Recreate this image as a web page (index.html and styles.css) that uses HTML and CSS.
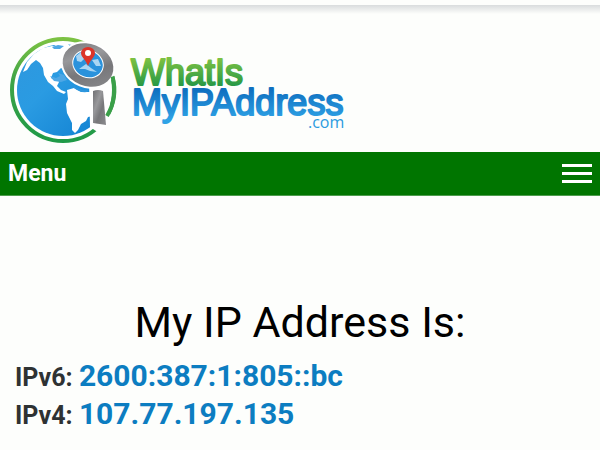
FILE: index.html
```html
<!DOCTYPE html>
<html lang="en">
<head>
    <meta charset="UTF-8">
    <meta name="viewport" content="width=device-width, initial-scale=1.0">
    <title>What Is My IP Address</title>
    <link rel="stylesheet" href="styles.css">
</head>
<body>
    <header>
        <a class="logo" href="#" aria-label="WhatIsMyIPAddress.com">
            <svg width="340" height="116" viewBox="8 32 340 116">
                <defs>
                    <linearGradient id="ring" x1="0" y1="0" x2="0" y2="1">
                        <stop offset="0" stop-color="#7cc243"/>
                        <stop offset="0.4" stop-color="#3fa447"/>
                        <stop offset="1" stop-color="#1f9a48"/>
                    </linearGradient>
                    <linearGradient id="sea" x1="0" y1="0" x2="1" y2="1">
                        <stop offset="0" stop-color="#2f97de"/>
                        <stop offset="0.4" stop-color="#2a9be2"/>
                        <stop offset="1" stop-color="#0f7fd0"/>
                    </linearGradient>
                    <linearGradient id="metal" x1="0" y1="0" x2="1" y2="1">
                        <stop offset="0" stop-color="#6f6f72"/>
                        <stop offset="0.35" stop-color="#98989b"/>
                        <stop offset="0.6" stop-color="#77777a"/>
                        <stop offset="1" stop-color="#8b8b8e"/>
                    </linearGradient>
                    <linearGradient id="green" gradientUnits="userSpaceOnUse" x1="0" y1="59" x2="0" y2="87">
                        <stop offset="0" stop-color="#7cc142"/>
                        <stop offset="1" stop-color="#239746"/>
                    </linearGradient>
                    <linearGradient id="blue" gradientUnits="userSpaceOnUse" x1="0" y1="90" x2="0" y2="120">
                        <stop offset="0" stop-color="#0f70c0"/>
                        <stop offset="1" stop-color="#2fa3e6"/>
                    </linearGradient>
                </defs>
                <!-- globe -->
                <circle cx="63" cy="90" r="51" fill="#fff" stroke="url(#ring)" stroke-width="4"/>
                <circle cx="63" cy="90" r="46" fill="url(#sea)"/>
                <!-- north america -->
                <path d="M23 72 L27 62 34 54 43 48 52 46 60 47 68 49 66 60 66 70 61 68 57 72 53 73 51 78 54 80 58 79 59 82 57 86 61 90 66 92 64 94 57 91 53 86 48 82 44 75 43 68 40 63 36 60 31 64 27 70Z" fill="#fff"/>
                <path d="M52 44 L60 42 68 44 73 49 66 54 64 49 58 47Z M60 57 L66 60 65 66 61 63Z" fill="#fff"/>
                <path d="M52 47 L58 45 64 46 60 49 54 49Z M50 76 L56 78 60 76 58 73 64 75 67 80 61 82 54 81Z" fill="#4ea7e5"/>
                <!-- south america -->
                <path d="M67 90 L74 88 81 92 92 92 93 116 88 117 86 121 81 124 78 130 75 133 72 130 72 123 67 113 66 104 68 99Z" fill="#fff"/>
                <!-- magnifier -->
                <ellipse cx="88" cy="65" rx="28" ry="23" fill="#fff" transform="rotate(22 88 65)"/>
                <path d="M89 80 H110 V124 L99 133 90 127Z" fill="#fff"/>
                <path d="M106 62 A51 51 0 0 1 107 116" fill="none" stroke="#3a9f48" stroke-width="4" stroke-dasharray="42 99" stroke-dashoffset="-16"/>
                <path d="M74 86 Q81 91 88 90 L87 92 Q80 93 74 88Z" fill="#2f97de"/>
                <ellipse cx="88" cy="65" rx="26" ry="21" fill="url(#metal)" transform="rotate(22 88 65)"/>
                <ellipse cx="88" cy="64" rx="16" ry="14" fill="#fff" transform="rotate(22 88 64)"/>
                <ellipse cx="88" cy="64" rx="15" ry="13" fill="#2a92dc" transform="rotate(22 88 64)"/>
                <path d="M76 56 L81 52 85 58 81 62 77 61Z M92 60 L98 59 101 66 96 66Z M79 69 L86 64 91 68 97 72 90 71 85 69Z" fill="#a9d5f3"/>
                <path d="M93 91 Q98 89 103 91 L106 125 93 123Z" fill="url(#metal)"/>
                <!-- pin -->
                <path d="M88 66 C86 60 81 57 81 53 A7 6 0 0 1 95 53 C95 57 90 60 88 66Z" fill="#dc3429"/>
                <circle cx="88" cy="53" r="3" fill="#fff"/>
                <!-- name -->
                <text class="name" x="131" y="85" fill="url(#green)" stroke="url(#green)">WhatIs</text>
                <text class="name" x="132" y="115" fill="url(#blue)" stroke="url(#blue)">MyIPAddress</text>
                <text class="domain" x="308" y="128" fill="#2b9bdf">.com</text>
            </svg>
        </a>
    </header>
    <nav>
        <span>Menu</span>
        <button class="toggle" aria-label="Open menu">
            <i></i><i></i><i></i>
        </button>
    </nav>
    <main>
        <h1>My IP Address Is:</h1>
        <p>IPv6: <a href="#">2600:387:1:805::bc</a></p>
        <p>IPv4: <a href="#">107.77.197.135</a></p>
    </main>
</body>
</html>
```
FILE: styles.css
```css
*{
    margin: 0px;
    padding: 0px;
    box-sizing: border-box;
}

body{
    background-color: #fdfefc;
    font-family: Roboto, Arial, sans-serif;
}
header{
    padding: 27px 8px 4px;
    border-top: 5px solid #fdfefc;
    background: linear-gradient(#d9dcdd, #fdfefc 9px);
    background-clip: padding-box;
}
.logo{
    display: block;
}
.logo svg{
    display: block;
    max-width: 100%;
}
.name{
    font-family: "Liberation Sans", Arial, sans-serif;
    font-size: 36px;
    stroke-width: 2px;
    stroke-linejoin: round;
}
.domain{
    font-family: "Open Sans", sans-serif;
    font-size: 16px;
}
nav{
    display: flex;
    justify-content: space-between;
    align-items: center;
    height: 44px;
    padding: 0px 8px;
    background-color: #007500;
    border-bottom: 1px solid #4d9c4d;
    color: white;
    font-size: 23px;
    font-weight: bold;
}
.toggle{
    display: flex;
    flex-direction: column;
    gap: 5px;
    border: none;
    background: none;
}
.toggle i{
    width: 30px;
    height: 3px;
    background-color: white;
}
main{
    padding: 100px 15px 16px;
}
h1{
    margin-bottom: 11px;
    font-size: 43px;
    font-weight: normal;
    line-height: 52px;
    text-align: center;
    color: black;
}
p{
    font-size: 25px;
    font-weight: bold;
    line-height: 38px;
    color: #2e3233;
}
p a{
    font-size: 30px;
    line-height: 30px;
    color: #0c7dc1;
    text-decoration: none;
}
```
